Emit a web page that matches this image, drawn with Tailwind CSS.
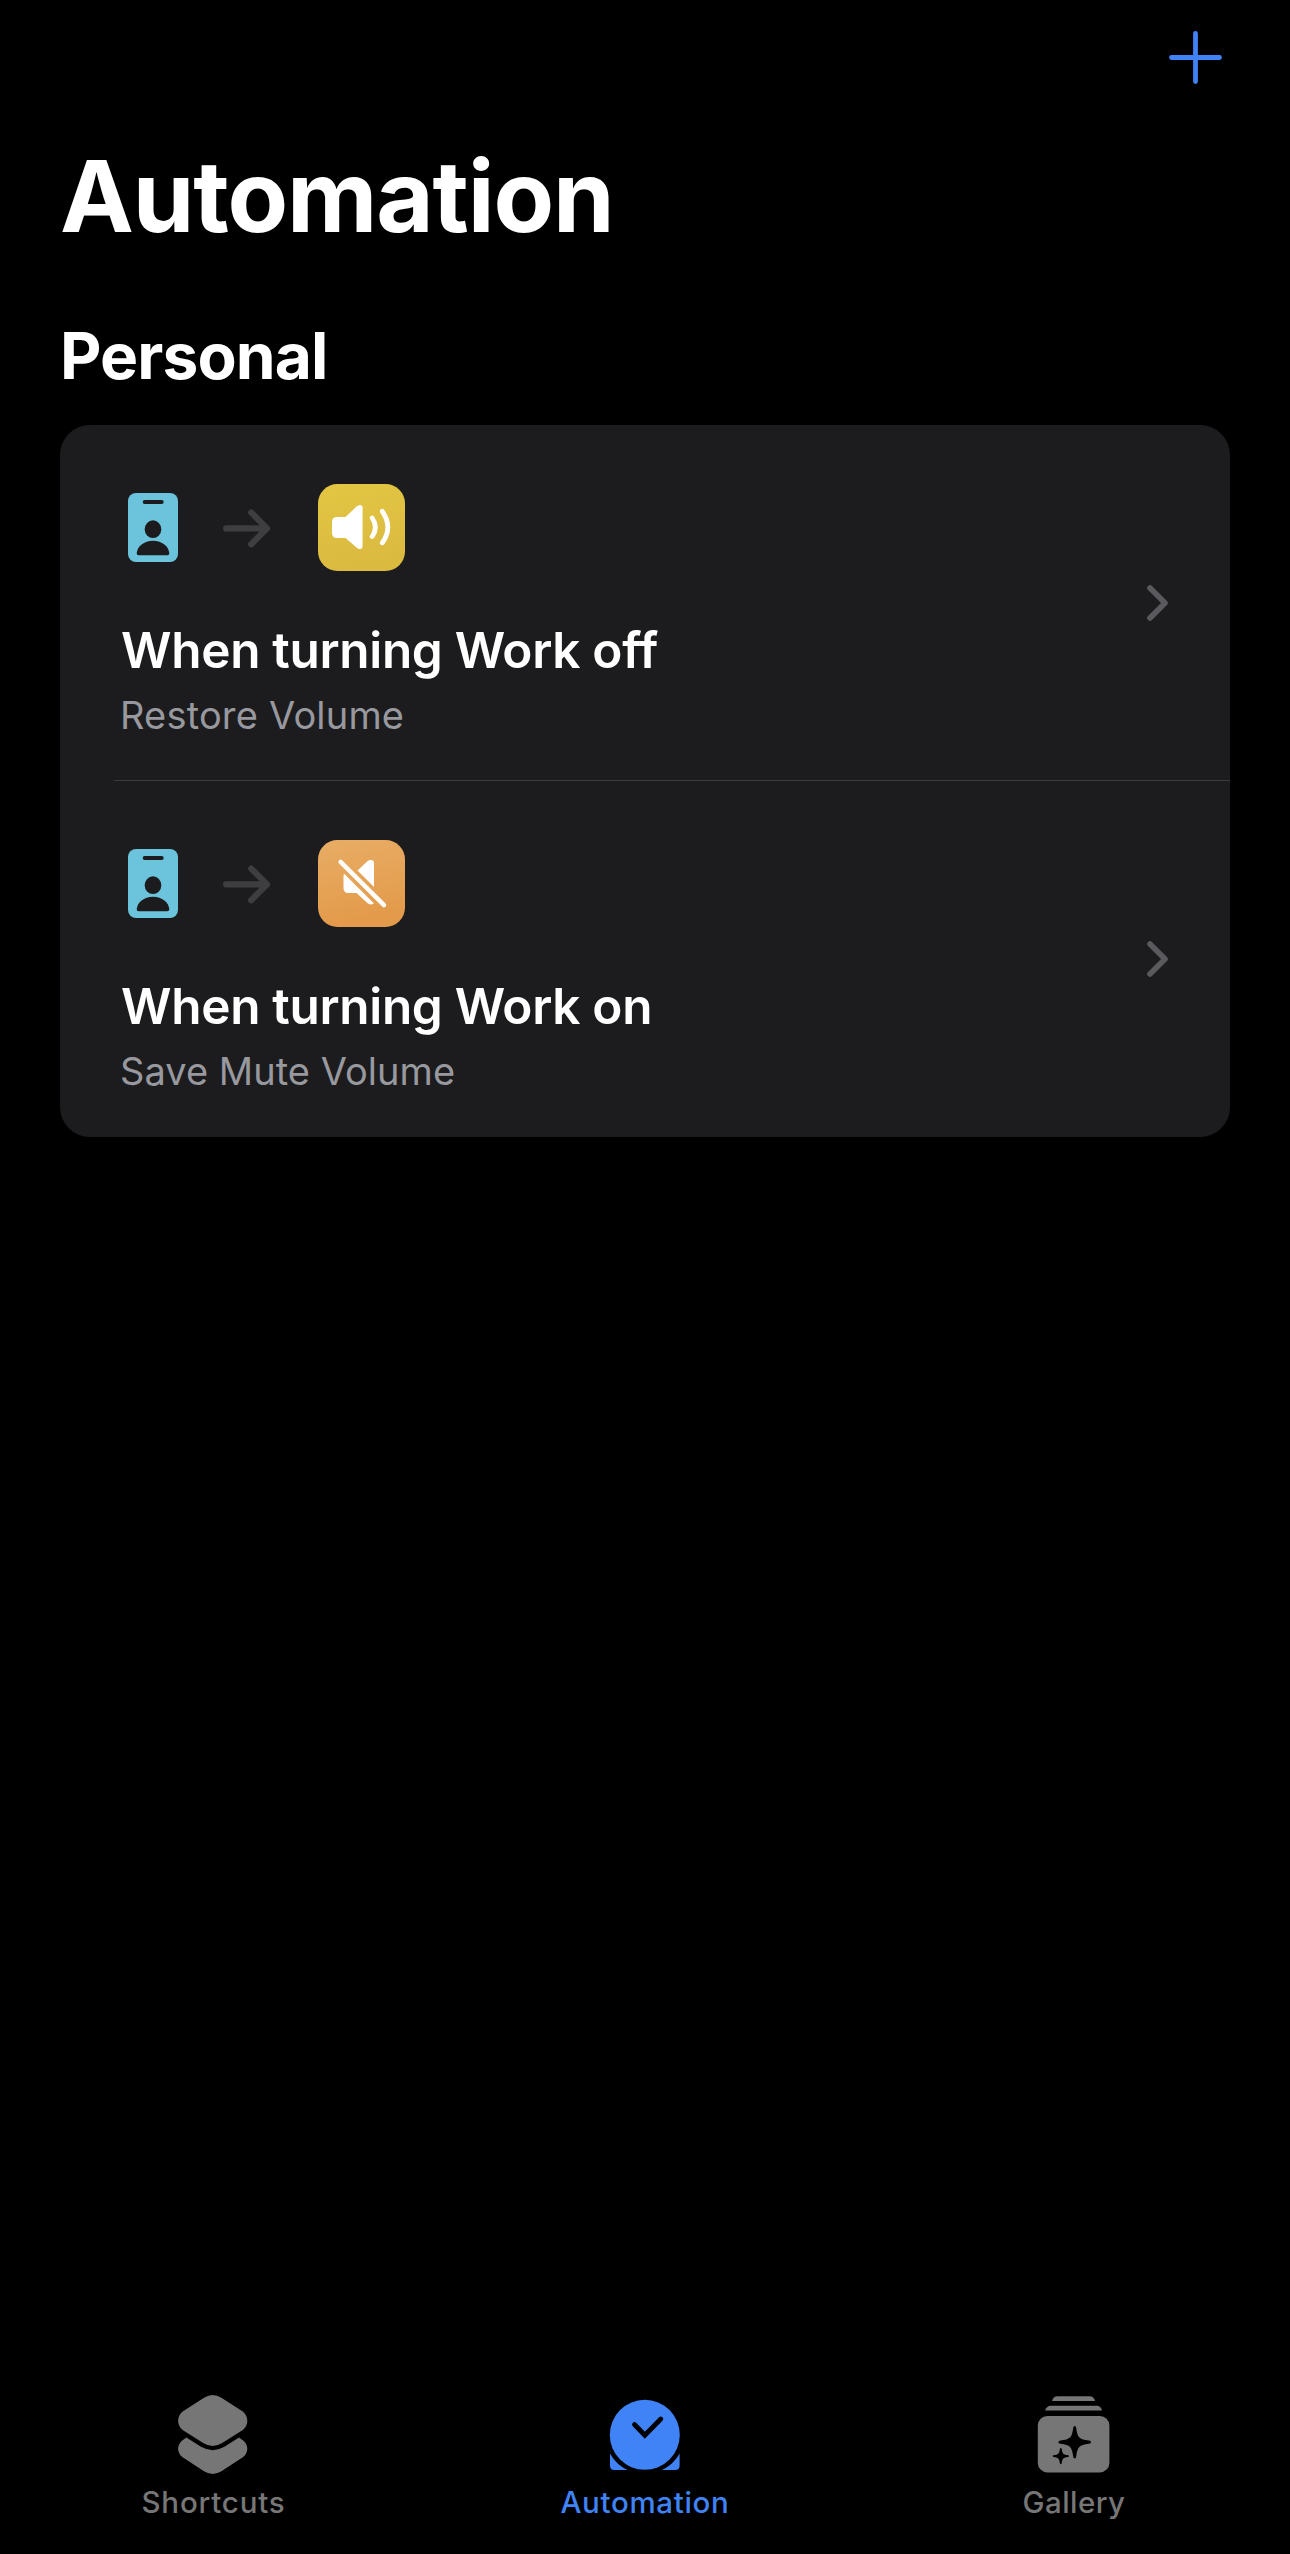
<!DOCTYPE html>
<html lang="en">
<head>
<meta charset="utf-8">
<title>Automation</title>
<script src="https://cdn.jsdelivr.net/npm/@tailwindcss/browser@4"></script>
</head>
<body class="bg-black text-white font-['Inter',sans-serif]">
<svg class="hidden">
  <defs>
    <symbol id="badge" viewBox="0 0 50 69">
      <rect width="50" height="69" rx="8" fill="#6bc4dc"/>
      <rect x="14.7" y="7" width="21" height="4" rx="2" fill="#1c1c1e"/>
      <ellipse cx="25" cy="36.2" rx="8.3" ry="8.9" fill="#1c1c1e"/>
      <path d="M10.7 62.2Q8.6 62.2 8.7 60C9.4 53.4 15.8 47.7 25 47.7S40.6 53.4 41.3 60Q41.4 62.2 39.3 62.2Z" fill="#1c1c1e"/>
    </symbol>
    <symbol id="arrow" viewBox="0 0 48 40">
      <path d="M3.2 20.4H43.5M28.2 4.6L44 20.4L28.2 36.2" fill="none" stroke="#3e3e41" stroke-width="6.2" stroke-linecap="round" stroke-linejoin="round"/>
    </symbol>
    <symbol id="chevron" viewBox="0 0 22 36">
      <path d="M3 3L18 18L3 33" fill="none" stroke="#5a5a5e" stroke-width="5.6" stroke-linecap="round" stroke-linejoin="round"/>
    </symbol>
  </defs>
</svg>
<div class="flex h-[2554px] w-[1290px] flex-col">
  <header class="flex h-[146px] justify-end pt-[31px] pr-[68px]">
    <svg class="size-[53px]" viewBox="0 0 53 53"><path d="M26.5 2.5V50.5M2.5 26.5H50.5" stroke="#3f83f7" stroke-width="4.8" stroke-linecap="round"/></svg>
  </header>
  <main class="grow px-[60px]">
    <h1 class="text-[99px] leading-[100px] font-bold tracking-[-1.13px]">Automation</h1>
    <h2 class="mt-[70px] text-[64px] leading-[80px] font-bold tracking-[-0.89px]">Personal</h2>
    <section class="mt-[29px] rounded-[30px] bg-[#1c1c1e]">
      <article class="flex h-[355px] justify-between pr-[61px] pl-[54px]">
        <div class="pt-[59px] pl-[6px]">
          <div class="flex h-[87px] items-center">
            <svg class="ml-[8px] h-[69px] w-[50px]"><use href="#badge"/></svg>
            <svg class="ml-[45px] h-[40px] w-[48px]"><use href="#arrow"/></svg>
            <svg class="ml-[47px] size-[87px]" viewBox="0 0 87 87">
              <defs><linearGradient id="yellow" x2="0.2" y2="1"><stop stop-color="#e3c643"/><stop offset="1" stop-color="#dbba40"/></linearGradient></defs>
              <rect width="87" height="87" rx="19.5" fill="url(#yellow)"/>
              <path d="M19 33H27.5L38.5 22.6Q40.3 21 42 21Q44.6 21 44.6 23.8V62Q44.6 65 42 65Q40.3 65 38.5 63.4L27.5 54H19Q14 54 14 49V38Q14 33 19 33Z" fill="#fff"/>
              <path d="M54.2 34Q60.6 43.3 54.2 52.5M64.3 27.3Q75.3 43.3 64.3 58.8" fill="none" stroke="#fff" stroke-width="4.8" stroke-linecap="round"/>
            </svg>
          </div>
          <h3 class="mt-[49px] pl-px text-[49.5px] leading-[60px] font-semibold tracking-[-0.31px]">When turning Work off</h3>
          <p class="mt-[11px] text-[38px] leading-[48px] tracking-[0.18px] text-[#98989f]">Restore Volume</p>
        </div>
        <svg class="h-[36px] w-[22px] self-center"><use href="#chevron"/></svg>
      </article>
      <article class="ml-[54px] flex h-[357px] justify-between border-t border-[#3c3c3f] pr-[61px]">
        <div class="pt-[59px] pl-[6px]">
          <div class="flex h-[87px] items-center">
            <svg class="ml-[8px] h-[69px] w-[50px]"><use href="#badge"/></svg>
            <svg class="ml-[45px] h-[40px] w-[48px]"><use href="#arrow"/></svg>
            <svg class="ml-[47px] size-[87px]" viewBox="0 0 87 87">
              <defs><linearGradient id="orange" x2="0.2" y2="1"><stop stop-color="#e8ad65"/><stop offset="1" stop-color="#e39a4a"/></linearGradient></defs>
              <rect width="87" height="87" rx="19.5" fill="url(#orange)"/>
              <path d="M39.5 30.5L49.4 21.2Q51 20 52.8 20Q56 20 56 23V47Z" fill="#fff"/>
              <path d="M26.2 33.8L55.8 63.2Q54.6 64.4 52.6 64.4Q50.8 64.3 49.3 62.9L38.6 53H30.3Q25.5 53 25.5 48.2V36.4Q25.5 34.8 26.2 33.8Z" fill="#fff"/>
              <path d="M22.6 21.9L66 65.1" stroke="#fff" stroke-width="4.4" stroke-linecap="round"/>
            </svg>
          </div>
          <h3 class="mt-[49px] pl-px text-[49.5px] leading-[60px] font-semibold tracking-[-0.31px]">When turning Work on</h3>
          <p class="mt-[11px] text-[38px] leading-[48px] tracking-[0.04px] text-[#98989f]">Save Mute Volume</p>
        </div>
        <svg class="h-[36px] w-[22px] self-center"><use href="#chevron"/></svg>
      </article>
    </section>
  </main>
  <nav class="grid h-[164px] grid-cols-[426px_438px_420px] text-[29.5px] leading-[40px] font-medium text-[#767676]">
    <a class="flex flex-col items-center">
      <svg class="h-[92px] w-[90px]" viewBox="0 0 90 92">
        <path d="M36 7.8Q44.7 2.2 53.4 7.8L74.8 21.5C80.8 26 80.8 35.5 74.8 40L53.8 53.2Q44.7 58.6 35.6 53.2L14.6 40C8.6 35.5 8.6 26 14.6 21.5Z" fill="currentColor"/>
        <path d="M18.4 47.4L33 56.8Q44.7 63.6 56.4 56.8L71 47.4L74.8 50.3C80.8 54.8 80.8 62.8 74.8 67.3L53.4 81.2Q44.7 86.6 36 81.2L14.6 67.3C8.6 62.8 8.6 54.8 14.6 50.3Z" fill="currentColor"/>
      </svg>
      <span class="pl-[1px] tracking-[0.81px]">Shortcuts</span>
    </a>
    <a class="flex flex-col items-center text-[#3f83f7]">
      <svg class="h-[92px] w-[90px]" viewBox="0 0 90 92">
        <path d="M10 63.5C14 70.5 19.5 76.3 27.5 80H14.5Q10 80 10 75.5ZM79.6 63.5C75.6 70.5 70 76.3 62 80H75.1Q79.6 80 79.6 75.5Z" fill="currentColor"/>
        <circle cx="44.8" cy="44.8" r="35" fill="currentColor"/>
        <path d="M34.5 34.5L44.8 45.2L60.8 29" fill="none" stroke="#000" stroke-width="4.8" stroke-linecap="round" stroke-linejoin="miter"/>
      </svg>
      <span class="tracking-[0.69px]">Automation</span>
    </a>
    <a class="flex flex-col items-center">
      <svg class="h-[92px] w-[90px]" viewBox="0 0 90 92">
        <path d="M23 11Q24 6.3 28.5 6.3H60.5Q65 6.3 66 11ZM16 20.5Q17.5 15.8 22 15.8H67.5Q72 15.8 73 20.5Z" fill="currentColor"/>
        <rect x="8.8" y="26" width="71.6" height="56.4" rx="9.5" fill="currentColor"/>
        <path d="M45.7 36Q47 36 47.2 38C48.6 47.8 50 49.2 60 50.6Q62 50.9 62 52.2Q62 53.5 60 53.7C50 55 48.6 56.8 47.2 66.6Q47 68.5 45.7 68.5Q44.4 68.5 44.2 66.6C42.8 56.8 41.4 55 31.4 53.7Q29.4 53.5 29.4 52.2Q29.4 50.9 31.4 50.6C41.4 49.2 42.8 47.8 44.2 38Q44.4 36 45.7 36Z" fill="#000"/>
        <path d="M31.8 58Q32.6 58 32.7 59C33.5 64 34.2 64.6 39 65.3Q40 65.4 40 66.1Q40 66.8 39 67C34.2 67.7 33.5 68.4 32.7 73.2Q32.6 74.2 31.8 74.2Q31 74.2 30.9 73.2C30.1 68.4 29.4 67.7 24.6 67Q23.6 66.8 23.6 66.1Q23.6 65.4 24.6 65.3C29.4 64.6 30.1 64 30.9 59Q31 58 31.8 58Z" fill="#000"/>
      </svg>
      <span class="tracking-[0.44px]">Gallery</span>
    </a>
  </nav>
</div>
</body>
</html>
